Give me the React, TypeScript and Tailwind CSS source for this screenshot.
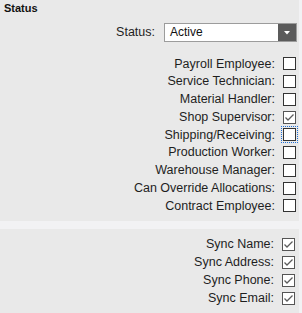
import React from "react";

type Flag = { label: string; checked?: boolean; focused?: boolean };

const roles: Flag[] = [
  { label: "Payroll Employee:" },
  { label: "Service Technician:" },
  { label: "Material Handler:" },
  { label: "Shop Supervisor:", checked: true },
  { label: "Shipping/Receiving:", focused: true },
  { label: "Production Worker:" },
  { label: "Warehouse Manager:" },
  { label: "Can Override Allocations:" },
  { label: "Contract Employee:" },
];

const syncs: Flag[] = [
  { label: "Sync Name:", checked: true },
  { label: "Sync Address:", checked: true },
  { label: "Sync Phone:", checked: true },
  { label: "Sync Email:", checked: true },
];

function Box({ checked, focused }: { checked?: boolean; focused?: boolean }) {
  return (
    <span
      className={`flex h-[13px] w-[13px] items-center justify-center border bg-white ${
        checked ? "border-[#555]" : "border-[#333]"
      } ${focused ? "outline-1 outline-dotted outline-offset-1 outline-[#1f6fd6]" : ""}`}
    >
      {checked && (
        <svg width="11" height="11" viewBox="0 0 11 11">
          <polyline
            points="1.5,5.5 4,8 9.5,2.5"
            fill="none"
            stroke="#5c5c5c"
            strokeWidth="1.3"
          />
        </svg>
      )}
    </span>
  );
}

function Row({ item }: { item: Flag }) {
  return (
    <div className="flex h-[17.75px] items-center justify-end pr-[3px]">
      <span className="mr-[8px] text-[12.5px] text-[#1e1e1e]">{item.label}</span>
      <Box checked={item.checked} focused={item.focused} />
    </div>
  );
}

export default function App() {
  return (
    <div
      className="flex h-[313px] w-[302px] flex-col bg-[#f2f2f4]"
      style={{ fontFamily: '"Liberation Sans", Arial, sans-serif' }}
    >
      {/* Status panel */}
      <div className="h-[221px] w-[299px] bg-[#e9e9e9]">
        <div className="px-[4px] pt-[1px] text-[11px] font-bold leading-[14px] text-[#111]">
          Status
        </div>

        <div className="mt-[8px] flex items-center justify-end pr-[2px]">
          <span className="mr-[9px] text-[12.5px] text-[#1e1e1e]">Status:</span>
          <div className="flex h-[19px] w-[133px] border border-[#9c9c9c] bg-white">
            <span className="flex-1 pl-[5px] text-[12px] leading-[17px] text-[#111]">
              Active
            </span>
            <span className="flex w-[18px] items-center justify-center bg-[#5b5b5b]">
              <svg width="6" height="4" viewBox="0 0 6 4">
                <polygon points="0,0 6,0 3,3.5" fill="#fff" />
              </svg>
            </span>
          </div>
        </div>

        <div className="mt-[13px]">
          {roles.map((r) => (
            <Row key={r.label} item={r} />
          ))}
        </div>
      </div>

      {/* Sync panel */}
      <div className="mt-[8px] flex-1 w-[299px] bg-[#e9e9e9] pt-[6px]">
        {syncs.map((s) => (
          <div key={s.label} className="flex h-[18px] items-center justify-end pr-[4px]">
            <span className="mr-[8px] text-[12.5px] text-[#1e1e1e]">{s.label}</span>
            <Box checked />
          </div>
        ))}
      </div>
    </div>
  );
}
